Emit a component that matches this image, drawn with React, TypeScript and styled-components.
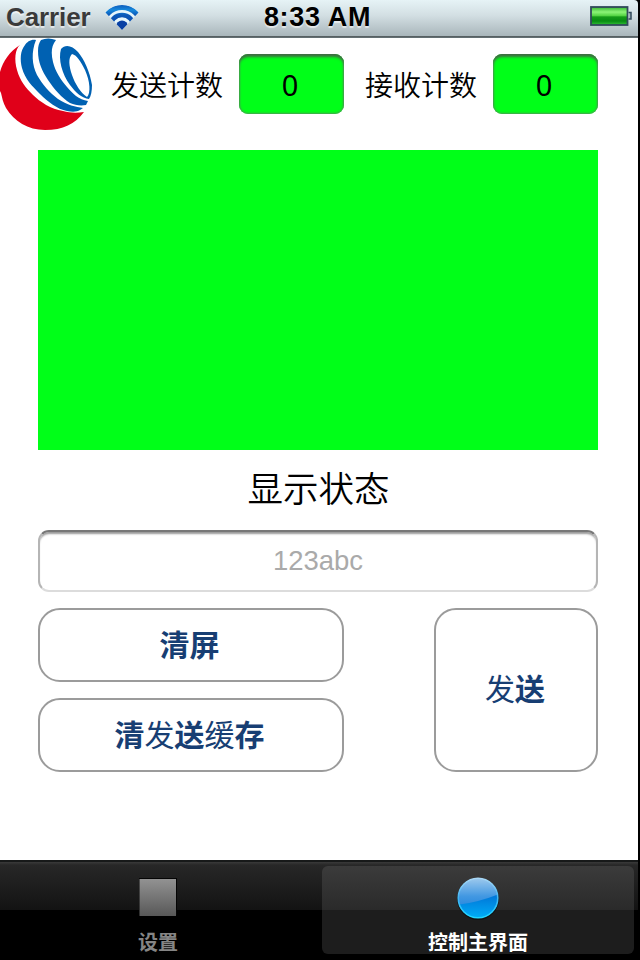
import React from "react";
import styled, { createGlobalStyle } from "styled-components";

const GlobalStyle = createGlobalStyle`
  *, *::before, *::after { box-sizing: border-box; }
  body {
    margin: 0;
    background: #000;
    font-family: "Liberation Sans", "Noto Sans CJK SC", sans-serif;
  }
`;

const Screen = styled.div`
  width: 640px;
  height: 960px;
  padding-right: 2px;
  display: flex;
  flex-direction: column;
  background: #000;
  overflow: hidden;
`;

const StatusBar = styled.header`
  height: 38px;
  flex: none;
  display: grid;
  grid-template-columns: 1fr auto 1fr;
  align-items: center;
  padding: 0 6px 4px;
  background: linear-gradient(#e6f3f6 0, #d3dfe3 40%, #a9b6bb 36px, #50585b 36px, #69767a 38px);
  border-radius: 0 4px 0 0;
  color: #2b2b2b;
  font-weight: bold;
  font-size: 26px;
  line-height: 32px;
  text-shadow: 0 2px 1px rgba(255, 255, 255, 0.6);
`;

const Carrier = styled.div`
  display: flex;
  align-items: center;
  gap: 14px;
  color: #3a3a3a;
  letter-spacing: -0.1px;
`;

const Clock = styled.time`
  color: #000;
  font-size: 27px;
  letter-spacing: 0.65px;
  margin-right: 3px;
`;

const Battery = styled.svg`
  justify-self: end;
  margin-top: -3px;
`;

const Main = styled.main`
  flex: 1;
  background: #fff;
  display: flex;
  flex-direction: column;
`;

const CounterRow = styled.div`
  height: 92px;
  display: flex;
  align-items: center;
`;

const CounterLabel = styled.label<{ $gap: number }>`
  width: 112px;
  margin-left: ${(p) => p.$gap}px;
  margin-right: 16px;
  font-size: 28px;
  line-height: 40px;
  font-family: "Noto Sans CJK SC", sans-serif;
  font-weight: 350;
  white-space: nowrap;
`;

const Counter = styled.output`
  width: 105px;
  height: 60px;
  flex: none;
  border-radius: 9px;
  background: #00ff18;
  box-shadow: inset 0 4px 3px -1px #3f6b42, inset 0 0 2px 1px #4c9d54;
  font: 29px/61px "Noto Sans", sans-serif;
  text-align: center;
  padding-right: 3px;
`;

const Display = styled.section`
  height: 300px;
  margin: 20px 40px 0 38px;
  background: #00ff18;
`;

const StatusTitle = styled.h1`
  margin: 11px 1px 0 0;
  height: 69px;
  font: 350 35.5px/52px "Noto Sans CJK SC", sans-serif;
  text-align: center;
`;

const Field = styled.input`
  height: 62px;
  margin: 0 40px 0 38px;
  border: 2px solid;
  border-color: #777 #b5b5b5 #dcdcdc;
  border-radius: 11px;
  padding: 0;
  outline: none;
  background: #fff;
  box-shadow: inset 0 3px 2px -1px #999;
  font: 27.5px "Liberation Sans", sans-serif;
  text-align: center;
  &::placeholder { color: #aaa; opacity: 1; }
`;

const Actions = styled.div`
  margin: 16px 40px 0 38px;
  display: grid;
  grid-template: 74px 74px / 306px 164px;
  gap: 16px 90px;
`;

const Button = styled.button<{ $tall?: boolean }>`
  grid-row: ${(p) => (p.$tall ? "1 / 3" : "auto")};
  grid-column: ${(p) => (p.$tall ? 2 : 1)};
  padding: ${(p) => (p.$tall ? "0 2px 7px 0" : "0 3px 5px 0")};
  border: 2px solid #9b9b9b;
  border-radius: 22px;
  background: #fff;
  color: #173e73;
  font: bold 30px/44px "Noto Sans CJK SC", sans-serif;
`;

const Light = styled.span`
  font-weight: 400;
`;

const TabBar = styled.nav`
  height: 100px;
  flex: none;
  padding: 4px 4px 6px 2px;
  display: grid;
  grid-template-columns: 1fr 312px;
  border-top: 2px solid #171919;
  background: linear-gradient(#3a3a3a 0, #272727 3px, #131313 48px, #000 48px);
`;

const Tab = styled.a<{ $active?: boolean }>`
  height: 88px;
  display: flex;
  flex-direction: column;
  align-items: center;
  padding-top: ${(p) => (p.$active ? 11 : 12)}px;
  padding-right: ${(p) => (p.$active ? 0 : 8)}px;
  border-radius: 6px;
  background: ${(p) => (p.$active ? "linear-gradient(#3b3b3b, #2a2a2a 44px, #1d1d1d 44px)" : "none")};
  color: ${(p) => (p.$active ? "#fff" : "#858585")};
  font: bold 20px/28px "Noto Sans CJK SC", sans-serif;
`;

const TabIcon = styled.svg`
  display: block;
  overflow: visible;
  flex: none;
`;

const TabLabel = styled.span<{ $top: number }>`
  margin-top: ${(p) => p.$top}px;
`;

const WifiIcon = () => (
  <svg width="34" height="26" viewBox="0 0 34 26">
    <defs>
      <linearGradient id="wifi" gradientUnits="userSpaceOnUse" x1="0" y1="1" x2="0" y2="26">
        <stop offset="0" stopColor="#0d5cbc" />
        <stop offset=".2" stopColor="#1689dc" />
        <stop offset=".4" stopColor="#0b58b8" />
        <stop offset="1" stopColor="#0840a4" />
      </linearGradient>
      <clipPath id="fan"><path d="M0 8Q17 -7 34 8L17 26Z" /></clipPath>
    </defs>
    <path d="M0 8Q17 -6 34 8L17 26Z" fill="#e5f5fb" />
    <g clipPath="url(#fan)" fill="none" stroke="url(#wifi)">
      <circle cx="17" cy="23" r="19.5" strokeWidth="5" />
      <circle cx="17" cy="23" r="12" strokeWidth="4.6" />
      <circle cx="17" cy="22.5" r="6" fill="#0840a4" stroke="none" />
    </g>
  </svg>
);

const BatteryIcon = () => (
  <Battery width="42" height="20" viewBox="0 0 42 20">
    <defs>
      <linearGradient id="charge" x1="0" y1="0" x2="0" y2="1">
        <stop offset="0" stopColor="#35b530" />
        <stop offset=".28" stopColor="#8cf477" />
        <stop offset=".48" stopColor="#55d544" />
        <stop offset=".55" stopColor="#159a18" />
        <stop offset=".78" stopColor="#078b12" />
        <stop offset="1" stopColor="#32c337" />
      </linearGradient>
    </defs>
    <rect x="1" y="1" width="36.5" height="18" fill="url(#charge)" stroke="#31495a" strokeWidth="1.8" />
    <path d="M38.5 6.5H41V13H38.5" fill="#a6b7c0" stroke="#31495a" strokeWidth="1.5" />
  </Battery>
);

const Logo = () => (
  <svg width="93" height="92" viewBox="0 0 93 92">
    <path
      fill="#e00019"
      d="M20 7C15 11 14 22 17 32C20 43 26 50 33 57C40 64 51 71 63 73C70 75 77 75 84 74C75 86 63 92 45 92C28 92 14 83 6 70C3 65 2 59 1 55L0 53V34C3 23 10 13 20 7Z"
    />
    <g fill="#0061b2">
      <path d="M36 2C31 1 27 4 25 7C20 13 20 22 22 30C25 41 32 48 40 56C48 64 57 71 67 73C72 74 77 74 80 72L83 70C76 69 67 67 58 61C50 55 42 46 37 37C32 27 31 14 36 2Z" />
      <path d="M41 2Q48 -1 56 2C51 8 51 16 53 24C55 33 61 42 67 49C72 55 79 62 88 63L86 67C80 68 75 67 70 65C62 60 54 51 48 42C42 33 38 24 38 13C38 8 39 5 41 2Z" />
      <path
        fillRule="evenodd"
        d="M61 11C65 6 72 7 78 14C84 21 90 34 92 47C92 53 91 58 89 61C82 60 76 55 70 47C62 36 58 21 61 11ZM72 16C68 20 69 28 72 37C75 46 81 55 87 59C91 55 90 43 85 32C81 24 77 17 72 16Z"
      />
    </g>
  </svg>
);

const SquareIcon = () => (
  <TabIcon width="38" height="38" viewBox="0 0 38 38">
    <defs>
      <linearGradient id="square" x1="0" y1="0" x2="0" y2="1">
        <stop stopColor="#929292" />
        <stop offset="1" stopColor="#585858" />
      </linearGradient>
    </defs>
    <path d="M0 0H38V37H0Z" fill="#050505" />
    <path d="M.5 1H37V38H.5Z" fill="url(#square)" />
  </TabIcon>
);

const CircleIcon = () => (
  <TabIcon width="42" height="42" viewBox="0 0 42 42">
    <defs>
      <linearGradient id="gloss" x1="0" y1="0" x2="0" y2="1">
        <stop stopColor="#a3ccee" />
        <stop offset=".6" stopColor="#4298e2" />
        <stop offset="1" stopColor="#2385dc" />
      </linearGradient>
      <linearGradient id="glow" x1="0" y1="0" x2="0" y2="1">
        <stop stopColor="#0073d6" />
        <stop offset="1" stopColor="#00aff8" />
      </linearGradient>
      <linearGradient id="rim" x1="0" y1="0" x2="0" y2="1">
        <stop stopColor="#a9d7f5" />
        <stop offset=".5" stopColor="#40b5f3" />
        <stop offset="1" stopColor="#20d5ff" />
      </linearGradient>
      <clipPath id="disc"><circle cx="21" cy="21" r="20" /></clipPath>
    </defs>
    <circle cx="21" cy="22" r="21" fill="#111" />
    <g clipPath="url(#disc)">
      <rect width="42" height="32" fill="url(#gloss)" />
      <path d="M0 28Q22 25 42 17V42H0Z" fill="url(#glow)" />
    </g>
    <circle cx="21" cy="21" r="19.8" fill="none" stroke="url(#rim)" strokeWidth="1.6" />
  </TabIcon>
);

export default function App() {
  return (
    <>
      <GlobalStyle />
      <Screen>
        <StatusBar>
          <Carrier>Carrier<WifiIcon /></Carrier>
          <Clock>8:33 AM</Clock>
          <BatteryIcon />
        </StatusBar>
        <Main>
          <CounterRow>
            <Logo />
            <CounterLabel $gap={18}>发送计数</CounterLabel>
            <Counter>0</Counter>
            <CounterLabel $gap={21}>接收计数</CounterLabel>
            <Counter>0</Counter>
          </CounterRow>
          <Display />
          <StatusTitle>显示状态</StatusTitle>
          <Field placeholder="123abc" />
          <Actions>
            <Button>清屏</Button>
            <Button $tall><Light>发</Light>送</Button>
            <Button>清<Light>发</Light>送<Light>缓</Light>存</Button>
          </Actions>
        </Main>
        <TabBar>
          <Tab>
            <SquareIcon />
            <TabLabel $top={12}>设置</TabLabel>
          </Tab>
          <Tab $active>
            <CircleIcon />
            <TabLabel $top={9}>控制主界面</TabLabel>
          </Tab>
        </TabBar>
      </Screen>
    </>
  );
}
